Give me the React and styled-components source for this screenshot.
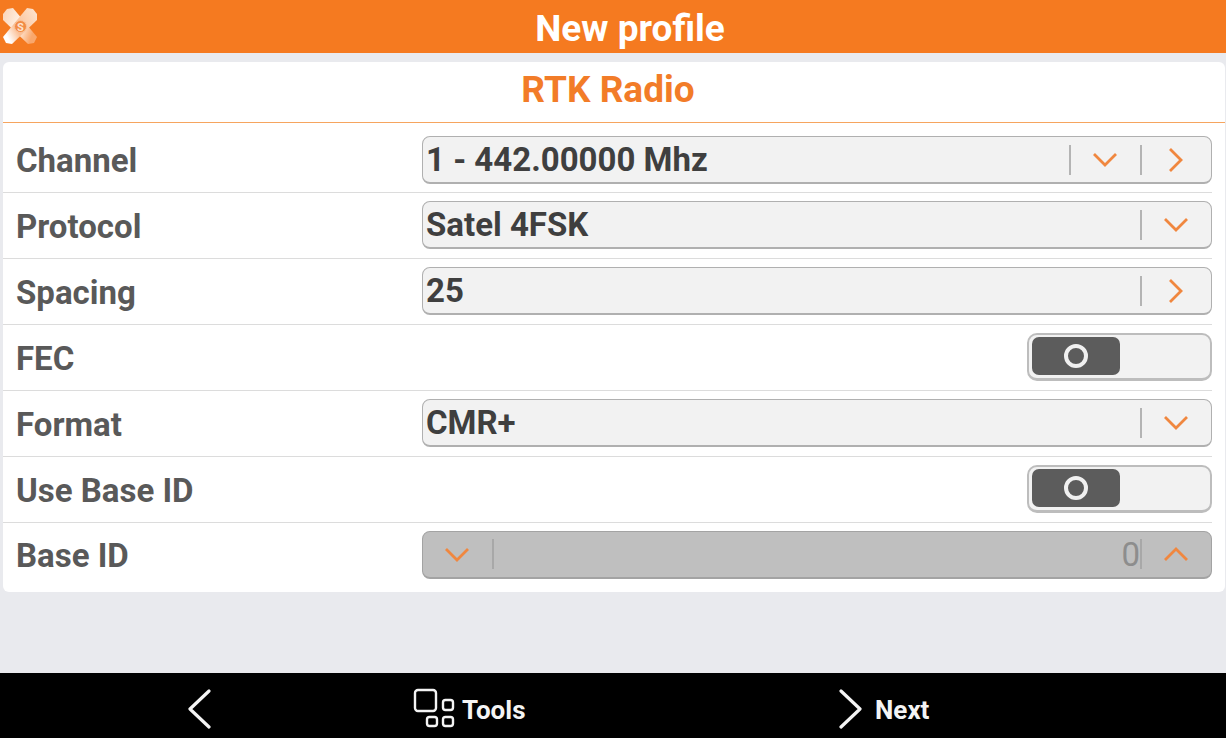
import React from "react";
import styled, { createGlobalStyle } from "styled-components";

const GlobalStyle = createGlobalStyle`
  html, body {
    margin: 0;
    padding: 0;
    background: #e9eaee;
  }
  * {
    box-sizing: border-box;
  }
`;

const Page = styled.div`
  width: 1226px;
  height: 738px;
  display: flex;
  flex-direction: column;
  background: #e9eaee;
  font-family: Roboto, "Liberation Sans", sans-serif;
  overflow: hidden;
`;

const Header = styled.header`
  position: relative;
  height: 53px;
  flex: none;
  display: flex;
  align-items: center;
  justify-content: center;
  background: #f57a20;
  color: #fff;
  font-size: 37px;
  font-weight: 700;
  padding: 3px 0 0 34px;
`;

const Logo = styled.svg`
  position: absolute;
  left: 3px;
  top: 8px;
`;

const Content = styled.main`
  flex: 1;
  padding: 9px 1px 0 3px;
`;

const Card = styled.section`
  background: #fff;
  border-radius: 6px;
  height: 530px;
`;

const Title = styled.h1`
  margin: 0;
  height: 61px;
  display: flex;
  align-items: center;
  justify-content: center;
  color: #f27c28;
  font-size: 37px;
  font-weight: 700;
  border-bottom: 1px solid #f6a55f;
  padding: 0 12px 6px 0;
`;

const Row = styled.div`
  display: flex;
  align-items: center;
  justify-content: space-between;
  height: ${(p) => p.$height || 66}px;
  margin-right: 13px;
  padding: ${(p) => p.$top || 0}px 0 ${(p) => (p.$last ? 3 : 1)}px 13px;
  border-bottom: ${(p) => (p.$last ? "none" : "1px solid #dcdcdc")};
`;

const Label = styled.span`
  color: #595959;
  font-size: 33px;
  font-weight: 700;
  padding-top: ${(p) => (p.$tight ? 0 : 2)}px;
`;

const Field = styled.div`
  width: 790px;
  height: 48px;
  display: flex;
  align-items: center;
  background: ${(p) => (p.$disabled ? "#bfbfbf" : "#f2f2f2")};
  border: 1.5px solid ${(p) => (p.$disabled ? "#a3a3a3" : "#b0b0b0")};
  border-bottom-width: 2px;
  border-radius: 8px;
`;

const Value = styled.span`
  flex: 1;
  padding-left: 3px;
  color: #3f3f3f;
  font-size: 33px;
  font-weight: 700;
`;

const NumberValue = styled.span`
  flex: 1;
  text-align: right;
  color: #8d8d8d;
  font-size: 33px;
  font-weight: 400;
`;

const Sep = styled.i`
  display: block;
  flex: none;
  width: 2px;
  height: 30px;
  background: ${(p) => (p.$disabled ? "#a8a8a8" : "#b4b4b4")};
`;

const IconBox = styled.span`
  flex: none;
  width: 69px;
  display: flex;
  justify-content: center;
  align-items: center;
  padding-right: 2px;
`;

const Toggle = styled.div`
  width: 185px;
  height: 48px;
  padding: 2px 3px;
  background: #f2f2f2;
  border: 2px solid #bdbdbd;
  border-bottom-width: 3px;
  border-radius: 10px;
`;

const Knob = styled.div`
  width: 88px;
  height: 38px;
  display: flex;
  align-items: center;
  justify-content: center;
  background: #5c5c5c;
  border-radius: 7px;
`;

const Ring = styled.span`
  width: 24px;
  height: 24px;
  border: 4px solid #f0f0f0;
  border-radius: 50%;
`;

const Footer = styled.footer`
  height: 65px;
  flex: none;
  display: grid;
  grid-template-columns: 413px 410px 1fr;
  align-items: center;
  padding-top: 4px;
  background: #000;
  color: #f4f4f4;
  font-size: 26px;
  font-weight: 700;
`;

const FooterItem = styled.div`
  display: flex;
  align-items: center;
  gap: ${(p) => p.$gap || 8}px;
  padding-left: ${(p) => p.$indent || 0}px;
`;

const FooterLabel = styled.span`
  padding-top: 5px;
`;

const FooterChevron = styled.svg`
  margin-top: 3px;
`;

const Chevron = ({ dir }) => {
  const points = {
    down: "2,2 13,13 24,2",
    up: "2,13 13,2 24,13",
    right: "2,2 13,13 2,24",
  }[dir];
  const vertical = dir === "right";
  return (
    <svg width={vertical ? 15 : 26} height={vertical ? 26 : 15} viewBox={vertical ? "0 0 15 26" : "0 0 26 15"}>
      <polyline points={points} fill="none" stroke="#f0873f" strokeWidth="2.8" />
    </svg>
  );
};

const XLogo = () => (
  <Logo width="35" height="37" viewBox="0 0 35 37">
    <defs>
      <linearGradient id="armA" x1="0" y1="0" x2="1" y2="0.4">
        <stop offset="0" stopColor="#fbd3b5" />
        <stop offset="0.6" stopColor="#fff3e9" />
        <stop offset="1" stopColor="#f9a76c" />
      </linearGradient>
      <linearGradient id="armB" x1="1" y1="0" x2="0" y2="0.6">
        <stop offset="0" stopColor="#fde6d3" />
        <stop offset="0.7" stopColor="#fbbf94" />
        <stop offset="1" stopColor="#fff" />
      </linearGradient>
    </defs>
    <path d="M0 6 L4 1 L10 0 L34 29 L31 35 L25 36 L0 12 Z" fill="url(#armA)" />
    <path d="M34 6 L30 1 L24 0 L0 29 L3 35 L9 36 L34 12 Z" fill="url(#armB)" />
    <circle cx="17.5" cy="18.5" r="6" fill="#f28b45" stroke="#f9c39a" strokeWidth="1" />
    <text x="17.5" y="22.5" textAnchor="middle" fontSize="11" fontWeight="700" fill="#fde3cf" fontFamily="Roboto, sans-serif">
      S
    </text>
  </Logo>
);

const ToggleSwitch = () => (
  <Toggle>
    <Knob>
      <Ring />
    </Knob>
  </Toggle>
);

export default function App() {
  return (
    <Page>
      <GlobalStyle />
      <Header>
        <XLogo />
        New profile
      </Header>
      <Content>
        <Card>
          <Title>RTK Radio</Title>
          <Row $height={70} $top={6}>
            <Label $tight>Channel</Label>
            <Field>
              <Value>1 - 442.00000 Mhz</Value>
              <Sep />
              <IconBox>
                <Chevron dir="down" />
              </IconBox>
              <Sep />
              <IconBox>
                <Chevron dir="right" />
              </IconBox>
            </Field>
          </Row>
          <Row>
            <Label>Protocol</Label>
            <Field>
              <Value>Satel 4FSK</Value>
              <Sep />
              <IconBox>
                <Chevron dir="down" />
              </IconBox>
            </Field>
          </Row>
          <Row>
            <Label>Spacing</Label>
            <Field>
              <Value>25</Value>
              <Sep />
              <IconBox>
                <Chevron dir="right" />
              </IconBox>
            </Field>
          </Row>
          <Row>
            <Label>FEC</Label>
            <ToggleSwitch />
          </Row>
          <Row>
            <Label>Format</Label>
            <Field>
              <Value>CMR+</Value>
              <Sep />
              <IconBox>
                <Chevron dir="down" />
              </IconBox>
            </Field>
          </Row>
          <Row>
            <Label>Use Base ID</Label>
            <ToggleSwitch />
          </Row>
          <Row $last>
            <Label>Base ID</Label>
            <Field $disabled>
              <IconBox>
                <Chevron dir="down" />
              </IconBox>
              <Sep $disabled />
              <NumberValue>0</NumberValue>
              <Sep $disabled />
              <IconBox>
                <Chevron dir="up" />
              </IconBox>
            </Field>
          </Row>
        </Card>
      </Content>
      <Footer>
        <FooterItem $indent={187}>
          <FooterChevron width="26" height="40" viewBox="0 0 26 40">
            <polyline points="22,2 3,20 22,38" fill="none" stroke="#f4f4f4" strokeWidth="3.2" strokeLinecap="round" strokeLinejoin="round" />
          </FooterChevron>
        </FooterItem>
        <FooterItem $gap={7}>
          <svg width="42" height="40" viewBox="0 0 42 40">
            <g fill="none" stroke="#f4f4f4" strokeWidth="2.4">
              <rect x="2" y="2" width="21" height="21" rx="3" />
              <rect x="30" y="12" width="10" height="10" rx="2.5" />
              <rect x="14" y="29" width="10" height="9" rx="2.5" />
              <rect x="30" y="29" width="10" height="9" rx="2.5" />
            </g>
          </svg>
          <FooterLabel>Tools</FooterLabel>
        </FooterItem>
        <FooterItem $indent={15} $gap={11}>
          <FooterChevron width="26" height="40" viewBox="0 0 26 40">
            <polyline points="3,2 22,20 3,38" fill="none" stroke="#f4f4f4" strokeWidth="3.2" strokeLinecap="round" strokeLinejoin="round" />
          </FooterChevron>
          <FooterLabel>Next</FooterLabel>
        </FooterItem>
      </Footer>
    </Page>
  );
}
